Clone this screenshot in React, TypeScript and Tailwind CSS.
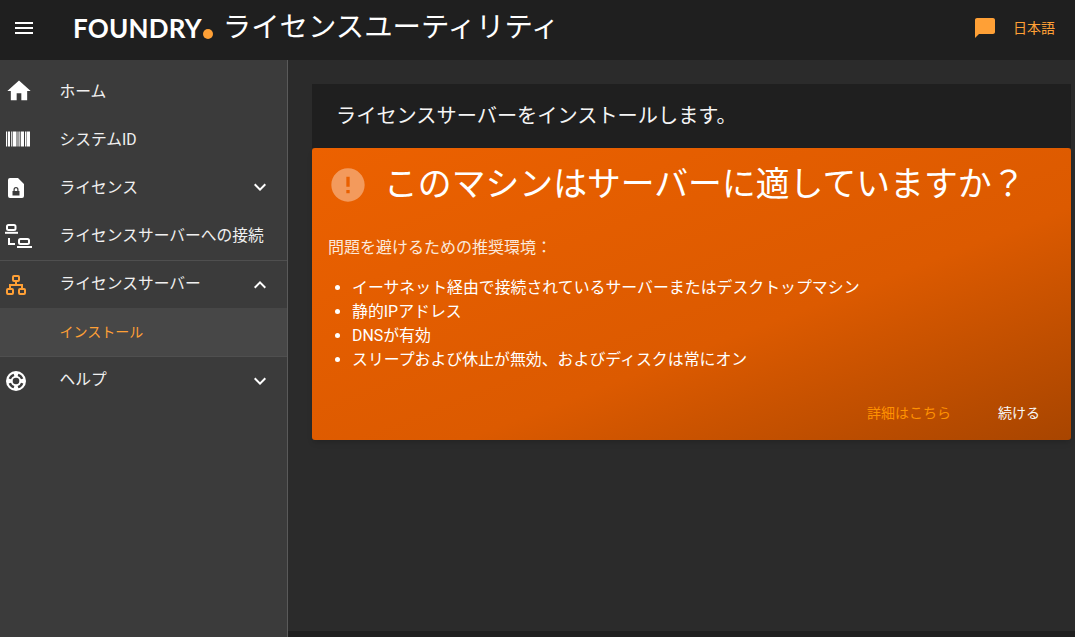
import { MdChatBubble, MdError, MdExpandLess, MdExpandMore, MdHome, MdMenu } from "react-icons/md";

const font = { fontFamily: '"Roboto", "Noto Sans CJK JP", sans-serif' };

function BarcodeIcon() {
  return (
    <svg width="24" height="16" viewBox="0 0 24 16" fill="white">
      <rect x="0" y="0.500" width="1.200" height="15" />
      <rect x="2" y="0.500" width="2" height="15" />
      <rect x="5.200" y="0.500" width="1" height="15" />
      <rect x="6.800" y="0.500" width="3.700" height="15" />
      <rect x="11.500" y="0.500" width="1" height="15" />
      <rect x="13.300" y="0.500" width="1" height="15" />
      <rect x="15" y="0.500" width="3" height="15" />
      <rect x="19" y="0.500" width="1.500" height="15" />
      <rect x="21" y="0.500" width="3" height="15" />
    </svg>
  );
}

function FileLockIcon() {
  return (
    <svg className="-ml-[2px] mt-[2px]" width="24" height="24" viewBox="0 0 24 24" fill="white">
      <path
        fillRule="evenodd"
        d="M6 2h8l6 6v12a2 2 0 0 1-2 2H6a2 2 0 0 1-2-2V4a2 2 0 0 1 2-2zM12 11a2.500 2.500 0 0 0-2.500 2.500V15H8.500v4.500h7V15h-1v-1.500A2.500 2.500 0 0 0 12 11zm0 1.200a1.300 1.300 0 0 1 1.300 1.300V15h-2.600v-1.500A1.300 1.300 0 0 1 12 12.200z"
      />
    </svg>
  );
}

function ConnectionIcon() {
  return (
    <svg className="-ml-px" width="27" height="26" viewBox="0 0 27 26" fill="none" stroke="white" strokeWidth="2">
      <rect x="2" y="3" width="8.500" height="5" rx="1.500" />
      <path d="M0 10.800h13" />
      <path d="M4 16v6h6" />
      <rect x="14" y="17" width="10" height="5" rx="1.500" />
      <path d="M12 25h15" />
    </svg>
  );
}

function LanIcon() {
  return (
    <svg width="20" height="20" viewBox="0 0 20 20" fill="none" stroke="#ffa036" strokeWidth="2">
      <rect x="7" y="1" width="6" height="5" rx="1" />
      <rect x="1" y="14" width="6" height="5" rx="1" />
      <rect x="13" y="14" width="6" height="5" rx="1" />
      <path d="M10 6v4M4 14v-4h12v4" />
    </svg>
  );
}

function LifebuoyIcon() {
  return (
    <svg width="20" height="20" viewBox="0 0 20 20">
      <circle cx="10" cy="10" r="10" fill="white" />
      <circle cx="10" cy="10" r="3.300" fill="#3b3b3b" />
      <path
        fill="none"
        stroke="#3b3b3b"
        strokeWidth="2.400"
        d="M16.180 12.010A6.500 6.500 0 0 1 12.010 16.180M7.990 16.180A6.500 6.500 0 0 1 3.820 12.010M3.820 7.990A6.500 6.500 0 0 1 7.990 3.820M12.010 3.820A6.500 6.500 0 0 1 16.180 7.990"
      />
    </svg>
  );
}

function NavItem({
  icon,
  label,
  chevron,
  short,
}: {
  icon: React.ReactNode;
  label: string;
  chevron?: "up" | "down";
  short?: boolean;
}) {
  return (
    <div className={short ? "flex h-[47px] items-center" : "flex h-12 items-center"}>
      <div className="flex w-[59.5px] shrink-0 justify-start pl-[6px]">{icon}</div>
      <span
        className={
          short
            ? "flex-1 pb-px text-[15.75px] text-[#f0f0f0]"
            : "flex-1 pt-px text-[15.75px] text-[#f0f0f0]"
        }
      >
        {label}
      </span>
      {chevron === "down" && <MdExpandMore className="mr-[15px] text-white" size={24} />}
      {chevron === "up" && <MdExpandLess className="mr-[15px] text-white" size={24} />}
    </div>
  );
}

export default function App() {
  return (
    <div className="flex h-[637px] w-[1075px] flex-col overflow-hidden bg-[#2b2b2b]" style={font}>
      {/* Top bar */}
      <header className="flex h-[60px] shrink-0 items-center bg-[#1f1f1f] pb-1">
        <MdMenu className="ml-3 text-white" size={24} />
        <div className="ml-[37px] flex items-end">
          <span
            className="text-[26px] font-bold leading-none tracking-[0.2px] text-white"
            style={{ fontFamily: '"Lato", sans-serif' }}
          >
            FOUNDRY
          </span>
          <span className="mb-[2px] ml-[1px] h-[10px] w-[10px] rounded-full bg-[#ffa036]" />
        </div>
        <h1 className="ml-[10px] text-[28.4px] font-normal text-white">ライセンスユーティリティ</h1>
        <div className="ml-auto flex items-center">
          <MdChatBubble className="text-[#ffa036]" size={24} />
          <span className="ml-[16px] mr-5 text-[14px] text-[#ffa036]">日本語</span>
        </div>
      </header>

      <div className="flex min-h-0 flex-1">
        {/* Sidebar */}
        <aside className="w-[288px] shrink-0 border-r border-[#5a5a5a] bg-[#3b3b3b] pt-[7px]">
          <NavItem icon={<MdHome className="-ml-px text-white" size={28} />} label="ホーム" />
          <NavItem icon={<BarcodeIcon />} label="システムID" />
          <NavItem icon={<FileLockIcon />} label="ライセンス" chevron="down" />
          <NavItem icon={<ConnectionIcon />} label="ライセンスサーバーへの接続" />
          <div className="mt-px border-t border-[#4f4f4f]">
            <NavItem icon={<LanIcon />} label="ライセンスサーバー" chevron="up" short />
          </div>
          <div className="flex h-12 items-center bg-[#474747] pl-[59.5px] text-[14px] text-[#ffa036]">
            インストール
          </div>
          <div className="border-t border-[#4f4f4f]">
            <NavItem icon={<LifebuoyIcon />} label="ヘルプ" chevron="down" short />
          </div>
        </aside>

        {/* Main */}
        <div className="flex flex-1 flex-col">
          <main className="flex-1 pl-6 pr-1 pt-6">
            <div className="flex h-16 items-center bg-[#1f1f1f] pl-[24px] text-[20.2px] text-[#f5f5f5]">
              ライセンスサーバーをインストールします。
            </div>
            <section className="h-[292px] rounded-[3px] bg-gradient-to-br from-[#ec6100] via-[#dc5a00] via-60% to-[#a84500] px-4 shadow-md">
              <div className="flex items-center pt-[17px]">
                <MdError className="text-[#f39a5c]" size={40} />
                <h2 className="ml-[16px] text-[33.85px] font-normal leading-10 text-white">
                  このマシンはサーバーに適していますか？
                </h2>
              </div>
              <p className="mt-[31px] text-[16px] leading-6 text-[#fbe9dc]">問題を避けるための推奨環境：</p>
              <ul className="mt-4 list-disc pl-6 text-[15.9px] leading-6 text-white">
                <li>イーサネット経由で接続されているサーバーまたはデスクトップマシン</li>
                <li>静的IPアドレス</li>
                <li>DNSが有効</li>
                <li>スリープおよび休止が無効、およびディスクは常にオン</li>
              </ul>
              <div className="mt-[31px] flex justify-end pr-[15px] text-[14px] leading-5">
                <span className="text-[#ff9100]">詳細はこちら</span>
                <span className="ml-[47px] text-[#f7f7f7]">続ける</span>
              </div>
            </section>
          </main>
          <div className="h-[6px] shrink-0 bg-[#1f1f1f]" />
        </div>
      </div>
    </div>
  );
}
